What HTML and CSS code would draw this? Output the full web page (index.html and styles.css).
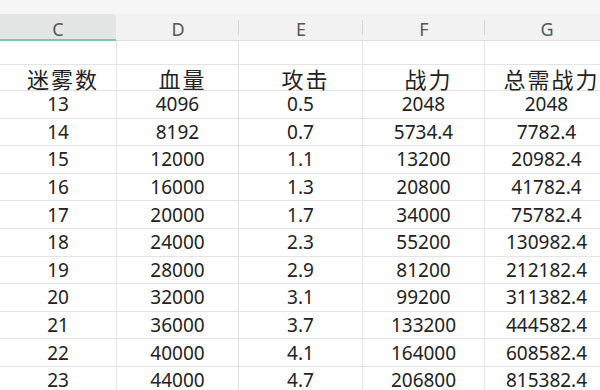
FILE: index.html
```html
<!DOCTYPE html>
<html lang="zh">
<head>
<meta charset="utf-8">
<link rel="stylesheet" href="styles.css">
</head>
<body>
<div class="sheet">
  <div class="topstrip"></div>
  <div class="row colheads">
    <div class="ch sel">C</div>
    <div class="ch"><span>D</span><i class="sep"></i></div>
    <div class="ch"><span>E</span><i class="sep"></i></div>
    <div class="ch"><span>F</span><i class="sep"></i></div>
    <div class="ch"><span>G</span></div>
  </div>
  <div class="row blank"><div></div><div></div><div></div><div></div><div></div></div>
  <div class="row titles"><div>迷雾数</div><div>血量</div><div>攻击</div><div>战力</div><div>总需战力</div></div>
  <div class="row data"><div>13</div><div>4096</div><div>0.5</div><div>2048</div><div>2048</div></div>
  <div class="row data"><div>14</div><div>8192</div><div>0.7</div><div>5734.4</div><div>7782.4</div></div>
  <div class="row data"><div>15</div><div>12000</div><div>1.1</div><div>13200</div><div>20982.4</div></div>
  <div class="row data"><div>16</div><div>16000</div><div>1.3</div><div>20800</div><div>41782.4</div></div>
  <div class="row data"><div>17</div><div>20000</div><div>1.7</div><div>34000</div><div>75782.4</div></div>
  <div class="row data"><div>18</div><div>24000</div><div>2.3</div><div>55200</div><div>130982.4</div></div>
  <div class="row data"><div>19</div><div>28000</div><div>2.9</div><div>81200</div><div>212182.4</div></div>
  <div class="row data"><div>20</div><div>32000</div><div>3.1</div><div>99200</div><div>311382.4</div></div>
  <div class="row data"><div>21</div><div>36000</div><div>3.7</div><div>133200</div><div>444582.4</div></div>
  <div class="row data"><div>22</div><div>40000</div><div>4.1</div><div>164000</div><div>608582.4</div></div>
  <div class="row data"><div>23</div><div>44000</div><div>4.7</div><div>206800</div><div>815382.4</div></div>
</div>
</body>
</html>
```
FILE: styles.css
```css
html, body {
  margin: 0;
  padding: 0;
  background: #ffffff;
}
.sheet {
  width: 600px;
  height: 390px;
  overflow: hidden;
  font-family: "Noto Sans", "Noto Sans CJK SC", sans-serif;
  color: #222222;
}
.topstrip {
  height: 14px;
  background: #f6f6f6;
}
.row {
  display: grid;
  grid-template-columns: 117px 122px 124px 122px 124px;
  grid-template-rows: 100%;
  line-height: 1;
}
.colheads {
  height: 26px;
  background: #f2f2f2;
  font-size: 18px;
  color: #555555;
  border-bottom: 1px solid #dddddd;
}
.ch {
  position: relative;
  display: flex;
  align-items: center;
  justify-content: center;
  padding-top: 4px;
  box-sizing: border-box;
}
.ch.sel {
  background: #e4e6e5;
  border-top-right-radius: 3px;
  border-bottom: 2px solid #7ccaa4;
  margin-bottom: -1px;
  margin-right: 1px;
}
.sep {
  position: absolute;
  right: 0;
  top: 6px;
  width: 1px;
  height: 15px;
  background: #d4d4d4;
}
.row > div {
  box-sizing: border-box;
  min-height: 0;
}
.blank > div, .titles > div, .data > div {
  border-right: 1px solid #e4e4e4;
  border-bottom: 1px solid #e4e4e4;
  display: flex;
  align-items: center;
  justify-content: center;
}
.blank {
  height: 24px;
}
.titles {
  height: 26px;
  font-family: "Noto Sans CJK SC", sans-serif;
  font-size: 22px;
  letter-spacing: 2px;
}
.titles > div {
  padding-left: 10px;
}
.data {
  height: 27.6px;
  font-size: 19px;
}
.data > div {
  padding-top: 1px;
}
```
